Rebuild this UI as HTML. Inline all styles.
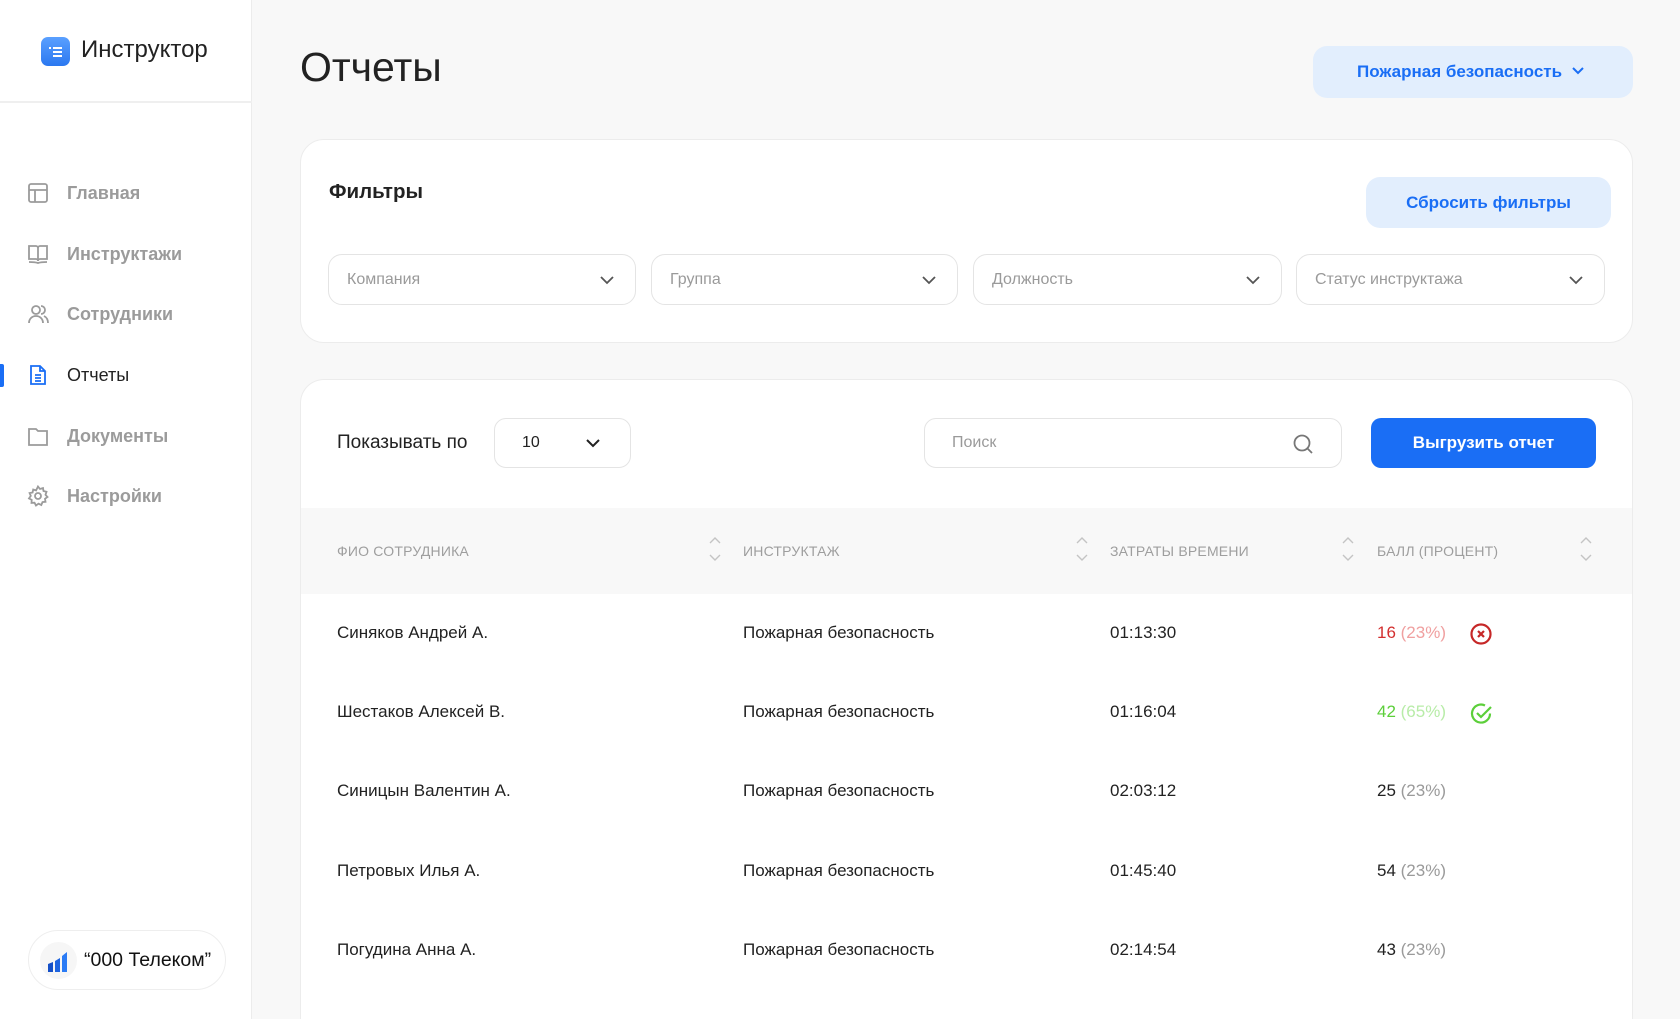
<!DOCTYPE html>
<html style="overflow:hidden;height:1019px"><head><meta charset="utf-8"><style>
*{box-sizing:border-box;margin:0;padding:0}
body{width:1680px;height:1019px;overflow:hidden;background:#f8f8f8;font-family:"Liberation Sans","Noto Sans CJK SC",sans-serif;color:#222;position:relative}
.abs{position:absolute}
.sb{left:0;top:0;width:252px;height:1019px;background:#fff;border-right:1px solid #ececec}
.nav{position:absolute;left:27px;display:flex;align-items:center;font-size:18px;color:#9b9b9b;font-weight:bold}
.nav svg{width:22px;height:22px;margin-right:18px}
.card{background:#fff;border:1px solid #ececec;border-radius:24px}
.sel{position:absolute;top:254px;height:51px;border:1px solid #e4e4e4;border-radius:14px;background:#fff;font-size:16px;color:#9a9a9a;padding-left:18px;line-height:49px}
.sel svg,.chev{position:absolute;right:20px;top:17px}
.th{position:absolute;top:543px;font-size:14px;color:#9e9e9e;letter-spacing:.2px}
.sort{position:absolute;top:535px}
.td{position:absolute;font-size:17px;color:#222}
</style></head><body>
<div class="abs sb">
  <div class="abs" style="left:41px;top:37px;width:29px;height:29px;border-radius:7px;background:linear-gradient(#5aa0ff,#2b78f0)">
    <svg width="29" height="29" viewBox="0 0 29 29"><rect x="8" y="10" width="2" height="2" fill="#fff"/><rect x="12" y="10" width="9" height="2" fill="#fff"/><rect x="12" y="14" width="9" height="2" fill="#fff"/><rect x="12" y="18" width="9" height="2" fill="#fff"/></svg>
  </div>
  <div class="abs" style="left:81px;top:36px;font-size:24px;color:#222">Инструктор</div>
  <div class="abs" style="left:0;top:101px;width:252px;height:2px;background:#efefef"></div>
  <div class="nav" style="top:182px"><svg viewBox="0 0 22 22" fill="none" stroke="#9b9b9b" stroke-width="1.8"><rect x="2" y="2" width="18" height="18" rx="2"/><path d="M2 8h18M8 8v12"/></svg>Главная</div>
  <div class="nav" style="top:243px"><svg viewBox="0 0 22 22" fill="none" stroke="#9b9b9b" stroke-width="1.8"><path d="M2 3h7a2 2 0 0 1 2 2v13a2 2 0 0 0-2-2H2zM20 3h-7a2 2 0 0 0-2 2v13a2 2 0 0 1 2-2h7zM2 19c3 0 6 0 9 1 3-1 6-1 9-1"/></svg>Инструктажи</div>
  <div class="nav" style="top:303px"><svg viewBox="0 0 22 22" fill="none" stroke="#9b9b9b" stroke-width="1.8"><circle cx="9" cy="7" r="4"/><path d="M2 20c0-4 3-7 7-7s7 3 7 7M14 3a4 4 0 0 1 0 8M17 13c2 1 4 3 4 7"/></svg>Сотрудники</div>
  <div class="abs" style="left:0;top:364px;width:4px;height:23px;background:#1a6ef5;border-radius:0 2px 2px 0"></div>
  <div class="nav" style="top:364px;color:#222;font-weight:normal"><svg viewBox="0 0 22 22" fill="none" stroke="#1a6ef5" stroke-width="1.8"><path d="M4 2h9l5 5v13H4z M13 2v5h5M8 11h6M8 14h6M8 17h6"/></svg>Отчеты</div>
  <div class="nav" style="top:425px"><svg viewBox="0 0 22 22" fill="none" stroke="#9b9b9b" stroke-width="1.8"><path d="M2 4h7l2 2h9v14H2z"/></svg>Документы</div>
  <div class="nav" style="top:485px"><svg viewBox="0 0 22 22" fill="none" stroke="#9b9b9b" stroke-width="1.8"><circle cx="11" cy="11" r="3"/><path d="M11 1.5l2 2.5 3-1 .5 3 3 .8-1 3 2 2.2-2.5 1.8.5 3-3 .3-1.2 2.9-2.8-1.3-2.5 1.8-1.5-2.8-3 .2.2-3-2.7-1.5 1.8-2.5-1.2-2.8 3-.6.6-3 2.9.9z"/></svg>Настройки</div>
  <div class="abs" style="left:28px;top:930px;width:198px;height:60px;border:1px solid #eee;border-radius:30px;background:#fff">
    <div class="abs" style="left:11px;top:11px;width:37px;height:37px;border-radius:50%;background:#f6f6f6">
      <svg width="37" height="37" viewBox="0 0 37 37"><path d="M8 22l5-2v10H8z" fill="#1550c8"/><path d="M15 19l5-3v14h-5z" fill="#1e64e0"/><path d="M22 14l5-4v20h-5z" fill="#2a7bf5"/></svg>
    </div>
    <div class="abs" style="left:55px;top:18px;font-size:19.5px;color:#111">“000 Телеком”</div>
  </div>
</div>

<div class="abs" style="left:300px;top:44px;font-size:41px;color:#222">Отчеты</div>
<div class="abs" style="left:1313px;top:46px;width:320px;height:52px;border-radius:14px;background:#e2eefd;color:#1a6ef5;font-size:17px;font-weight:bold;line-height:52px;padding-left:44px">Пожарная безопасность
  <svg class="abs" style="left:258px;top:20px" width="14" height="10" viewBox="0 0 14 10" fill="none" stroke="#1a6ef5" stroke-width="2"><path d="M2 2l5 5 5-5"/></svg></div>

<div class="abs card" style="left:300px;top:139px;width:1333px;height:204px">
  <div class="abs" style="left:28px;top:40px;font-size:20.5px;font-weight:bold;color:#222">Фильтры</div>
  <div class="abs" style="left:1065px;top:37px;width:245px;height:51px;border-radius:14px;background:#e2eefd;color:#1a6ef5;font-size:17px;font-weight:bold;text-align:center;line-height:51px">Сбросить фильтры</div>
</div>
<div class="sel" style="left:328px;width:308px">Компания<svg width="16" height="16" viewBox="0 0 16 16" fill="none" stroke="#555" stroke-width="1.8"><path d="M2 5l6 6 6-6"/></svg></div>
<div class="sel" style="left:651px;width:307px">Группа<svg width="16" height="16" viewBox="0 0 16 16" fill="none" stroke="#555" stroke-width="1.8"><path d="M2 5l6 6 6-6"/></svg></div>
<div class="sel" style="left:973px;width:309px">Должность<svg width="16" height="16" viewBox="0 0 16 16" fill="none" stroke="#555" stroke-width="1.8"><path d="M2 5l6 6 6-6"/></svg></div>
<div class="sel" style="left:1296px;width:309px">Статус инструктажа<svg width="16" height="16" viewBox="0 0 16 16" fill="none" stroke="#555" stroke-width="1.8"><path d="M2 5l6 6 6-6"/></svg></div>

<div class="abs card" style="left:300px;top:379px;width:1333px;height:640px;overflow:hidden;border-bottom:none;border-radius:24px 24px 0 0">
  <div class="abs" style="left:0;top:128px;width:1333px;height:86px;background:#f8f8f8"></div>
</div>
<div class="abs" style="left:337px;top:432px;font-size:19px;color:#222">Показывать по</div>
<div class="abs" style="left:494px;top:418px;width:137px;height:50px;border:1px solid #e4e4e4;border-radius:12px;background:#fff;font-size:16px;line-height:48px;padding-left:27px;color:#222">10
  <svg class="abs" style="left:90px;top:17px" width="16" height="14" viewBox="0 0 16 14" fill="none" stroke="#222" stroke-width="2"><path d="M2 4l6 6 6-6"/></svg></div>
<div class="abs" style="left:924px;top:418px;width:418px;height:50px;border:1px solid #e4e4e4;border-radius:12px;background:#fff;font-size:16px;line-height:48px;padding-left:27px;color:#9a9a9a">Поиск
  <svg class="abs" style="left:367px;top:14px" width="22" height="22" viewBox="0 0 22 22" fill="none" stroke="#777" stroke-width="1.8"><circle cx="10" cy="10" r="7.5"/><path d="M15.5 15.5l4.5 4.5"/></svg></div>
<div class="abs" style="left:1371px;top:418px;width:225px;height:50px;border-radius:10px;background:#1a6ef5;color:#fff;font-size:17px;font-weight:bold;text-align:center;line-height:50px">Выгрузить отчет</div>

<div class="th" style="left:337px">ФИО СОТРУДНИКА</div>
<div class="th" style="left:743px">ИНСТРУКТАЖ</div>
<div class="th" style="left:1110px">ЗАТРАТЫ ВРЕМЕНИ</div>
<div class="th" style="left:1377px">БАЛЛ (ПРОЦЕНТ)</div>
<svg class="sort" style="left:708px" width="14" height="28" viewBox="0 0 14 28" fill="none" stroke="#c4c4c4" stroke-width="1.4"><path d="M2 8l5-5 5 5M2 20l5 5 5-5"/></svg>
<svg class="sort" style="left:1075px" width="14" height="28" viewBox="0 0 14 28" fill="none" stroke="#c4c4c4" stroke-width="1.4"><path d="M2 8l5-5 5 5M2 20l5 5 5-5"/></svg>
<svg class="sort" style="left:1341px" width="14" height="28" viewBox="0 0 14 28" fill="none" stroke="#c4c4c4" stroke-width="1.4"><path d="M2 8l5-5 5 5M2 20l5 5 5-5"/></svg>
<svg class="sort" style="left:1579px" width="14" height="28" viewBox="0 0 14 28" fill="none" stroke="#c4c4c4" stroke-width="1.4"><path d="M2 8l5-5 5 5M2 20l5 5 5-5"/></svg>

<div class="td" style="left:337px;top:623px">Синяков Андрей А.</div><div class="td" style="left:743px;top:623px">Пожарная безопасность</div><div class="td" style="left:1110px;top:623px">01:13:30</div><div class="td" style="left:1377px;top:623px;color:#d32f2f">16 <span style="color:#f0a0a0">(23%)</span></div>
<svg class="abs" style="left:1470px;top:623px" width="22" height="22" viewBox="0 0 22 22" fill="none" stroke="#c62828" stroke-width="2.2"><circle cx="11" cy="11" r="9.5"/><path d="M8 8l6 6M14 8l-6 6"/></svg>
<div class="td" style="left:337px;top:702px">Шестаков Алексей В.</div><div class="td" style="left:743px;top:702px">Пожарная безопасность</div><div class="td" style="left:1110px;top:702px">01:16:04</div><div class="td" style="left:1377px;top:702px;color:#5ccf3a">42 <span style="color:#b8eca8">(65%)</span></div>
<svg class="abs" style="left:1470px;top:702px" width="23" height="23" viewBox="0 0 23 23" fill="none" stroke="#5ccf3a" stroke-width="2.2"><path d="M20 11.5A9 9 0 1 1 15 3.5"/><path d="M7 11l4 4 10-10"/></svg>
<div class="td" style="left:337px;top:781px">Синицын Валентин А.</div><div class="td" style="left:743px;top:781px">Пожарная безопасность</div><div class="td" style="left:1110px;top:781px">02:03:12</div><div class="td" style="left:1377px;top:781px">25 <span style="color:#9a9a9a">(23%)</span></div>
<div class="td" style="left:337px;top:861px">Петровых Илья А.</div><div class="td" style="left:743px;top:861px">Пожарная безопасность</div><div class="td" style="left:1110px;top:861px">01:45:40</div><div class="td" style="left:1377px;top:861px">54 <span style="color:#9a9a9a">(23%)</span></div>
<div class="td" style="left:337px;top:940px">Погудина Анна А.</div><div class="td" style="left:743px;top:940px">Пожарная безопасность</div><div class="td" style="left:1110px;top:940px">02:14:54</div><div class="td" style="left:1377px;top:940px">43 <span style="color:#9a9a9a">(23%)</span></div>
</body></html>
